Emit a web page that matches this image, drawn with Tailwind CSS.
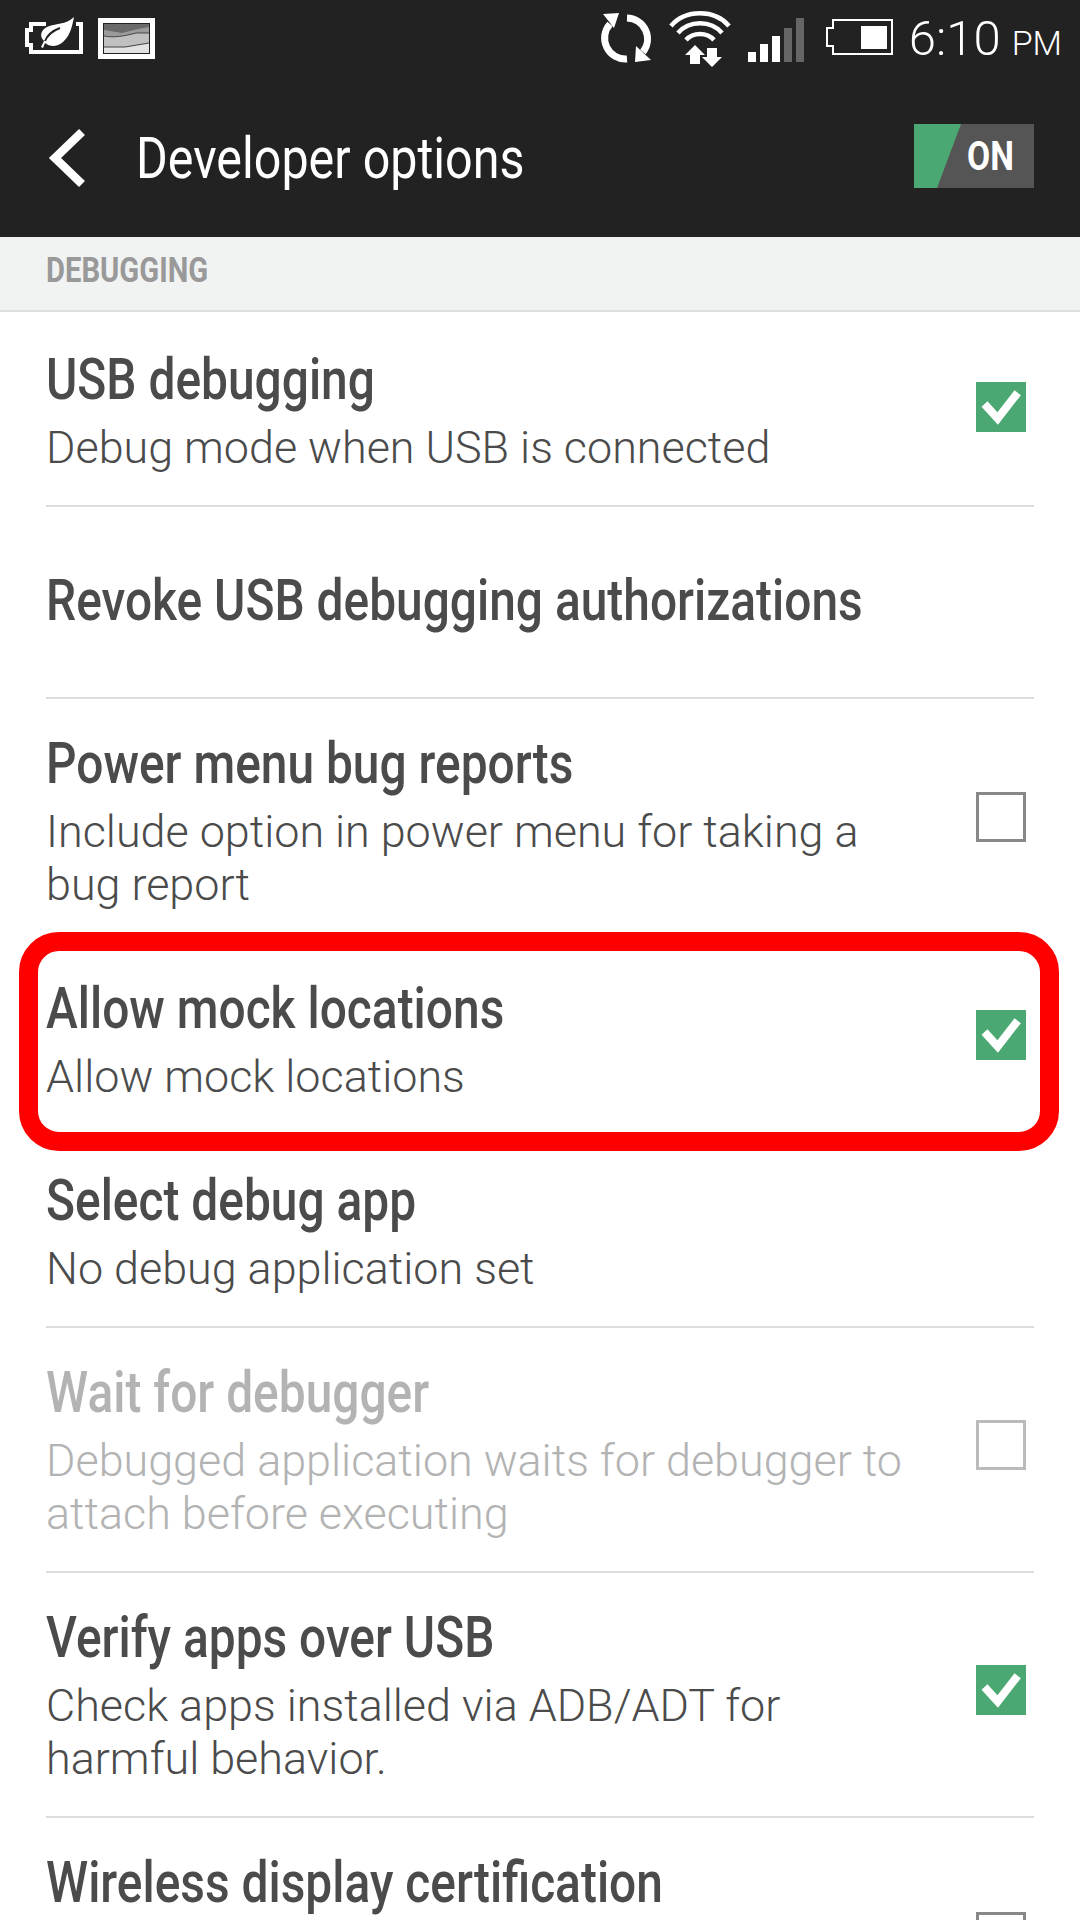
<!DOCTYPE html>
<html>
<head>
<meta charset="utf-8">
<script src="https://cdn.jsdelivr.net/npm/@tailwindcss/browser@4"></script>
</head>
<body class="bg-white">
<div class="relative w-[1080px] h-[1920px] overflow-hidden bg-white font-['Roboto',sans-serif]">

  <!-- status + action bar -->
  <div class="bg-[#222222] h-[237px] text-white">
    <div class="flex items-start h-[75px] pl-[20px]">
      <svg class="mt-[10px]" width="140" height="55" viewBox="20 10 140 55" fill="none">
        <path d="M46 24H31V30H27V45H31V52H81V24H76" stroke="#fff" stroke-width="4"/>
        <path d="M74 17C72 27 70 36 63 42C57 47 50 47 45 43L43 48L41 47L44 41C39 36 41 30 47 27C55 23 66 25 74 17Z" fill="#fff"/>
        <path d="M45 41C47 36 52 31 60 28" stroke="#222" stroke-width="2"/>
        <rect x="100.500" y="20.500" width="52" height="36" fill="#222" stroke="#fff" stroke-width="5"/>
        <rect x="104" y="24" width="45" height="29" fill="#6a6a6a"/>
        <path d="M104 30L122 33L138 29L149 27V53H104Z" fill="#9a9a9a"/>
        <path d="M104 36C114 38 125 36 136 33L149 33V53H104Z" fill="#c0c0c0"/>
        <path d="M104 47H125L149 43V53H104Z" fill="#e2e2e2"/>
        <path d="M104 36C114 38 125 36 136 33L149 33M104 47H125L149 43" stroke="#444" stroke-width="1"/>
      </svg>
      <div class="ml-auto flex items-start pr-[18px]">
        <svg class="mt-[5px]" width="296" height="62" viewBox="600 5 296 62" fill="none">
          <path d="M611 24A21 21 0 0 0 628 59" stroke="#fff" stroke-width="7"/>
          <path d="M604 14L620 13L615 28Z" fill="#fff"/>
          <path d="M628 18A21 21 0 0 1 644 52" stroke="#fff" stroke-width="7"/>
          <path d="M636 62L652 60L637 46Z" fill="#fff"/>
          <path d="M672 26C686 9 716 9 730 26" stroke="#fff" stroke-width="4.500"/>
          <path d="M679 33C690 20 712 20 723 33" stroke="#fff" stroke-width="4.500"/>
          <path d="M687 40C694 32 708 32 715 40" stroke="#fff" stroke-width="4.500"/>
          <path d="M691 55L691 64L701 64L701 55L706 55L696 45L686 55Z" fill="#fff"/>
          <path d="M708 48L718 48L718 57L723 57L713 67L703 57L708 57Z" fill="#fff"/>
          <rect x="749" y="52" width="8" height="10" fill="#fff"/>
          <rect x="761" y="44" width="8" height="18" fill="#fff"/>
          <rect x="773" y="36" width="8" height="26" fill="#fff"/>
          <rect x="785" y="28" width="8" height="34" fill="#666"/>
          <rect x="797" y="18" width="8" height="44" fill="#666"/>
          <path d="M834 20H893V54H834V46H828V28H834Z" stroke="#fff" stroke-width="2"/>
          <rect x="862" y="26" width="26" height="23" fill="#fff"/>
        </svg>
        <div class="ml-[14px] mt-[12px] font-light leading-[54px] whitespace-nowrap"><span class="text-[49px]">6:10</span><span class="text-[34px] ml-[11px]">PM</span></div>
      </div>
    </div>
    <div class="flex items-center h-[162px] relative">
      <svg class="ml-[44px] translate-y-[2px]" width="44" height="60" viewBox="0 0 44 60" fill="none">
        <path d="M38 4L11 30L38 56" stroke="#fff" stroke-width="8.500"/>
      </svg>
      <span class="ml-[48px] inline-block origin-left scale-x-[0.835] text-[58px] leading-[70px] whitespace-nowrap translate-y-[2px]">Developer options</span>
      <div class="ml-auto mr-[46px] relative w-[120px] h-[64px] bg-[#555555]">
        <svg class="absolute left-0 top-0" width="48" height="64" viewBox="0 0 48 64"><path d="M0 0H47L23 64H0Z" fill="#4ca872"/></svg>
        <span class="absolute left-[53px] top-[10px] inline-block origin-left scale-x-[0.84] text-[40px] leading-[46px] font-bold whitespace-nowrap">ON</span>
      </div>
    </div>
  </div>

  <!-- section -->
  <div class="h-[75px] bg-[#f1f3f3] border-b-2 border-[#dedede] pl-[46px] flex items-center">
    <span class="inline-block origin-left scale-x-[0.835] text-[35px] leading-[40px] font-bold text-[#999999] whitespace-nowrap -translate-y-[3px]">DEBUGGING</span>
  </div>

  <!-- rows -->
  <div class="mx-[46px] text-[#4b4b4b]">
    <div class="h-[195px] border-b-2 border-[#dddddd] flex justify-between pt-[34px]">
      <div><div class="origin-left scale-x-[0.84] text-[57px] leading-[67px] font-[460] whitespace-nowrap">USB debugging</div><div class="mt-[8px] text-[44.9px] leading-[53px] font-light">Debug mode when USB is connected</div></div>
      <div class="self-center mb-[38px] mr-[8px] w-[50px] h-[50px] bg-[#4ca872]"><svg width="50" height="50" viewBox="0 0 50 50" fill="none"><path d="M8.500 22L21.700 36.500L41.700 10.700" stroke="#fff" stroke-width="8"/></svg></div>
    </div>
    <div class="h-[192px] border-b-2 border-[#dddddd] flex items-center">
      <div class="origin-left scale-x-[0.84] text-[57px] leading-[67px] font-[460] whitespace-nowrap -translate-y-[2px]">Revoke USB debugging authorizations</div>
    </div>
    <div class="h-[245px] border-b-2 border-[#dddddd] flex justify-between pt-[31px]">
      <div class="w-[880px]"><div class="origin-left scale-x-[0.84] text-[57px] leading-[67px] font-[460] whitespace-nowrap">Power menu bug reports</div><div class="mt-[8px] text-[44.9px] leading-[53px] font-light">Include option in power menu for taking a<br>bug report</div></div>
      <div class="self-center mb-[38px] mr-[8px] w-[50px] h-[50px] border-[3px] border-[#888888]"></div>
    </div>
    <div class="h-[192px] border-b-2 border-[#dddddd] flex justify-between pt-[31px]">
      <div><div class="origin-left scale-x-[0.84] text-[57px] leading-[67px] font-[460] whitespace-nowrap">Allow mock locations</div><div class="mt-[8px] text-[44.9px] leading-[53px] font-light">Allow mock locations</div></div>
      <div class="self-center mb-[39px] mr-[8px] w-[50px] h-[50px] bg-[#4ca872]"><svg width="50" height="50" viewBox="0 0 50 50" fill="none"><path d="M8.500 22L21.700 36.500L41.700 10.700" stroke="#fff" stroke-width="8"/></svg></div>
    </div>
    <div class="h-[192px] border-b-2 border-[#dddddd] flex justify-between pt-[31px]">
      <div><div class="origin-left scale-x-[0.84] text-[57px] leading-[67px] font-[460] whitespace-nowrap">Select debug app</div><div class="mt-[8px] text-[44.9px] leading-[53px] font-light">No debug application set</div></div>
    </div>
    <div class="h-[245px] border-b-2 border-[#dddddd] flex justify-between pt-[31px] text-[#b3b3b3]">
      <div class="w-[880px]"><div class="origin-left scale-x-[0.84] text-[57px] leading-[67px] font-[460] whitespace-nowrap">Wait for debugger</div><div class="mt-[8px] text-[44.9px] leading-[53px] font-light">Debugged application waits for debugger to<br>attach before executing</div></div>
      <div class="self-center mb-[40px] mr-[8px] w-[50px] h-[50px] border-[3px] border-[#bbbbbb]"></div>
    </div>
    <div class="h-[245px] border-b-2 border-[#dddddd] flex justify-between pt-[31px]">
      <div class="w-[880px]"><div class="origin-left scale-x-[0.84] text-[57px] leading-[67px] font-[460] whitespace-nowrap">Verify apps over USB</div><div class="mt-[8px] text-[44.9px] leading-[53px] font-light">Check apps installed via ADB/ADT for<br>harmful behavior.</div></div>
      <div class="self-center mb-[40px] mr-[8px] w-[50px] h-[50px] bg-[#4ca872]"><svg width="50" height="50" viewBox="0 0 50 50" fill="none"><path d="M8.500 22L21.700 36.500L41.700 10.700" stroke="#fff" stroke-width="8"/></svg></div>
    </div>
    <div class="h-[245px] flex justify-between pt-[31px]">
      <div class="origin-left scale-x-[0.84] text-[57px] leading-[67px] font-[460] whitespace-nowrap">Wireless display certification</div>
      <div class="self-start mt-[63px] mr-[8px] w-[50px] h-[50px] border-[3px] border-[#888888]"></div>
    </div>
  </div>

  <!-- red annotation -->
  <div class="absolute left-[19px] top-[932px] w-[1040px] h-[219px] border-[19px] border-[#ff0000] rounded-[40px]"></div>
</div>
</body>
</html>
